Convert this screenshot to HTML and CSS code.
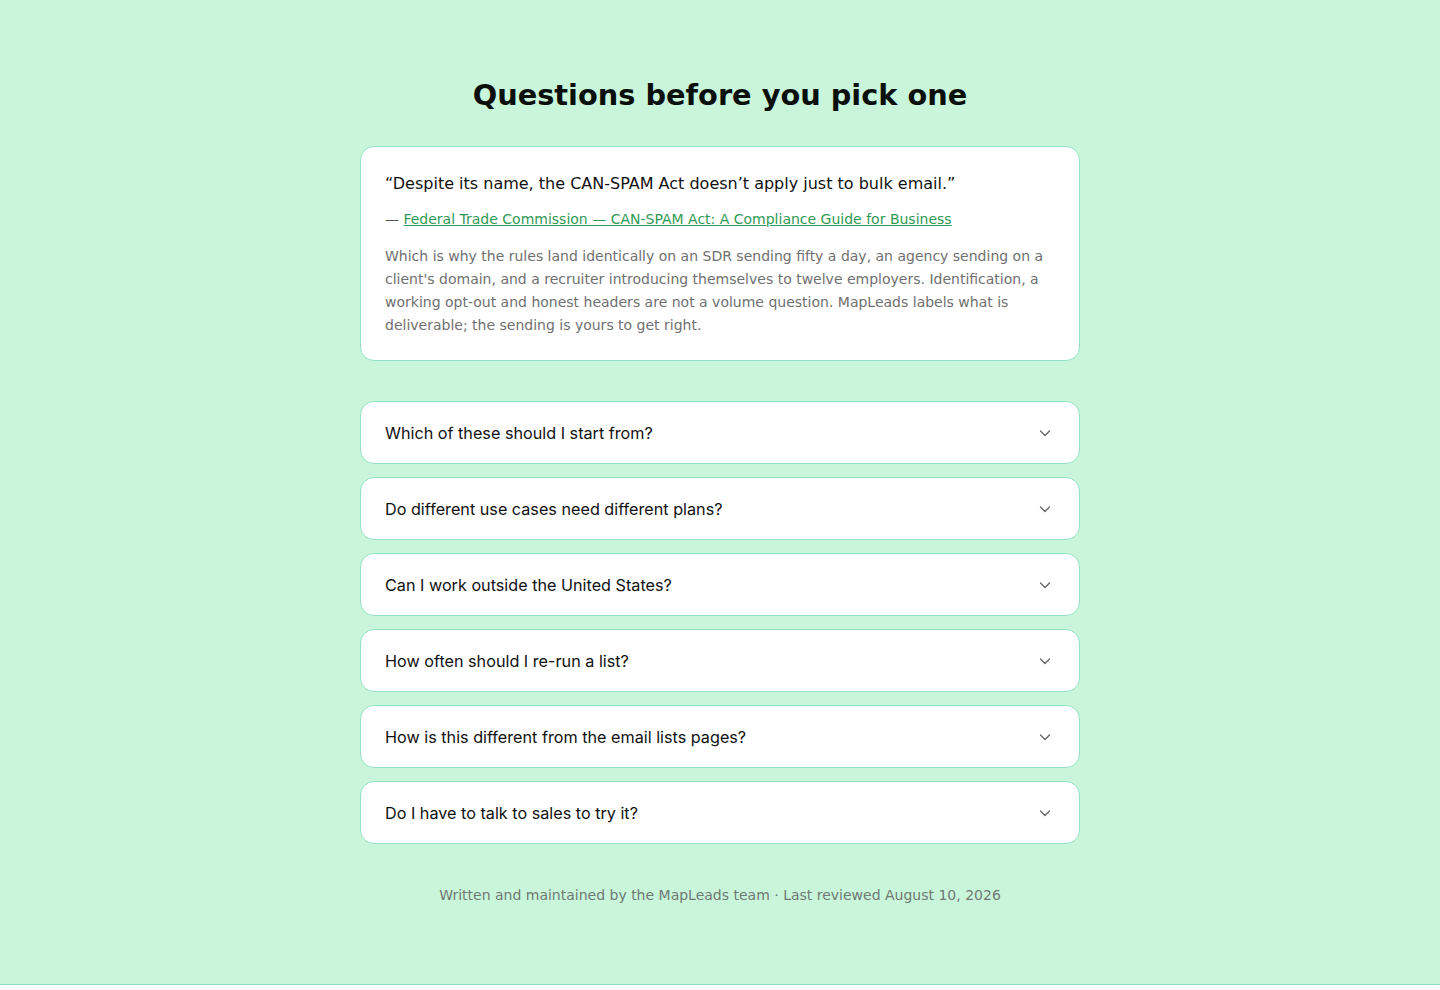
FILE: index.html
```html
<!DOCTYPE html>
<html lang="en">
<head>
<meta charset="utf-8">
<title>Questions before you pick one</title>
<link rel="stylesheet" href="styles.css">
</head>
<body>
<section class="faq">
  <h2 class="title">Questions before you pick one</h2>
  <figure class="quote-card">
    <blockquote class="quote">“Despite its name, the CAN-SPAM Act doesn’t apply just to bulk email.”</blockquote>
    <figcaption class="cite">— <a href="#">Federal Trade Commission — CAN-SPAM Act: A Compliance Guide for Business</a></figcaption>
    <p class="note">Which is why the rules land identically on an SDR sending fifty a day, an agency sending on a client's domain, and a recruiter introducing themselves to twelve employers. Identification, a working opt-out and honest headers are not a volume question. MapLeads labels what is deliverable; the sending is yours to get right.</p>
  </figure>
  <div class="items">
    <details class="item"><summary><span>Which of these should I start from?</span><svg class="chev" viewBox="0 0 16 16" width="16" height="16"><path d="M3.5 6l4.5 4.5L12.5 6" fill="none" stroke="#666" stroke-width="1.3" stroke-linecap="round" stroke-linejoin="round"/></svg></summary></details>
    <details class="item"><summary><span>Do different use cases need different plans?</span><svg class="chev" viewBox="0 0 16 16" width="16" height="16"><path d="M3.5 6l4.5 4.5L12.5 6" fill="none" stroke="#666" stroke-width="1.3" stroke-linecap="round" stroke-linejoin="round"/></svg></summary></details>
    <details class="item"><summary><span>Can I work outside the United States?</span><svg class="chev" viewBox="0 0 16 16" width="16" height="16"><path d="M3.5 6l4.5 4.5L12.5 6" fill="none" stroke="#666" stroke-width="1.3" stroke-linecap="round" stroke-linejoin="round"/></svg></summary></details>
    <details class="item"><summary><span>How often should I re-run a list?</span><svg class="chev" viewBox="0 0 16 16" width="16" height="16"><path d="M3.5 6l4.5 4.5L12.5 6" fill="none" stroke="#666" stroke-width="1.3" stroke-linecap="round" stroke-linejoin="round"/></svg></summary></details>
    <details class="item"><summary><span>How is this different from the email lists pages?</span><svg class="chev" viewBox="0 0 16 16" width="16" height="16"><path d="M3.5 6l4.5 4.5L12.5 6" fill="none" stroke="#666" stroke-width="1.3" stroke-linecap="round" stroke-linejoin="round"/></svg></summary></details>
    <details class="item"><summary><span>Do I have to talk to sales to try it?</span><svg class="chev" viewBox="0 0 16 16" width="16" height="16"><path d="M3.5 6l4.5 4.5L12.5 6" fill="none" stroke="#666" stroke-width="1.3" stroke-linecap="round" stroke-linejoin="round"/></svg></summary></details>
  </div>
  <p class="byline">Written and maintained by the MapLeads team · Last reviewed August 10, 2026</p>
</section>
</body>
</html>
```
FILE: styles.css
```css
html, body {
  margin: 0;
  padding: 0;
  background: #ffffff;
}
body {
  font-family: "DejaVu Sans", sans-serif;
  color: #111;
}
.faq {
  background: #c9f6db;
  border-bottom: 1px solid #8fdcc0;
  min-height: 985px;
  box-sizing: border-box;
  padding: 77px 0 0;
  display: flex;
  flex-direction: column;
  align-items: center;
}
.title {
  margin: 0 0 33px;
  font-size: 28.8px;
  line-height: 36px;
  font-weight: 700;
  color: #0a0f0c;
}
.quote-card {
  margin: 0 0 40px;
  width: 720px;
  box-sizing: border-box;
  background: #fff;
  border: 1px solid #94e2c6;
  border-radius: 14px;
  padding: 25px 24px 23px;
}
.quote {
  margin: 0;
  font-size: 16px;
  line-height: 24px;
  color: #111;
}
.cite {
  margin: 13px 0 0;
  font-size: 14px;
  line-height: 20px;
  color: #555;
}
.cite a {
  color: #2f9a55;
  text-decoration: underline;
}
.note {
  margin: 16px 0 0;
  font-size: 14px;
  line-height: 23px;
  color: #707070;
}
.items {
  width: 720px;
  display: flex;
  flex-direction: column;
  gap: 13px;
}
.item {
  background: #fff;
  border: 1px solid #94e2c6;
  border-radius: 14px;
}
.item summary {
  list-style: none;
  display: flex;
  align-items: center;
  justify-content: space-between;
  padding: 0 26px 0 24px;
  height: 61px;
  font-family: Inter, "DejaVu Sans", sans-serif;
  font-size: 16.2px;
  color: #111;
  cursor: pointer;
}
.item summary::-webkit-details-marker { display: none; }
.chev { display: block; }
.byline {
  margin: 41px 0 0;
  font-size: 14px;
  line-height: 20px;
  color: #6f7a72;
}
```
